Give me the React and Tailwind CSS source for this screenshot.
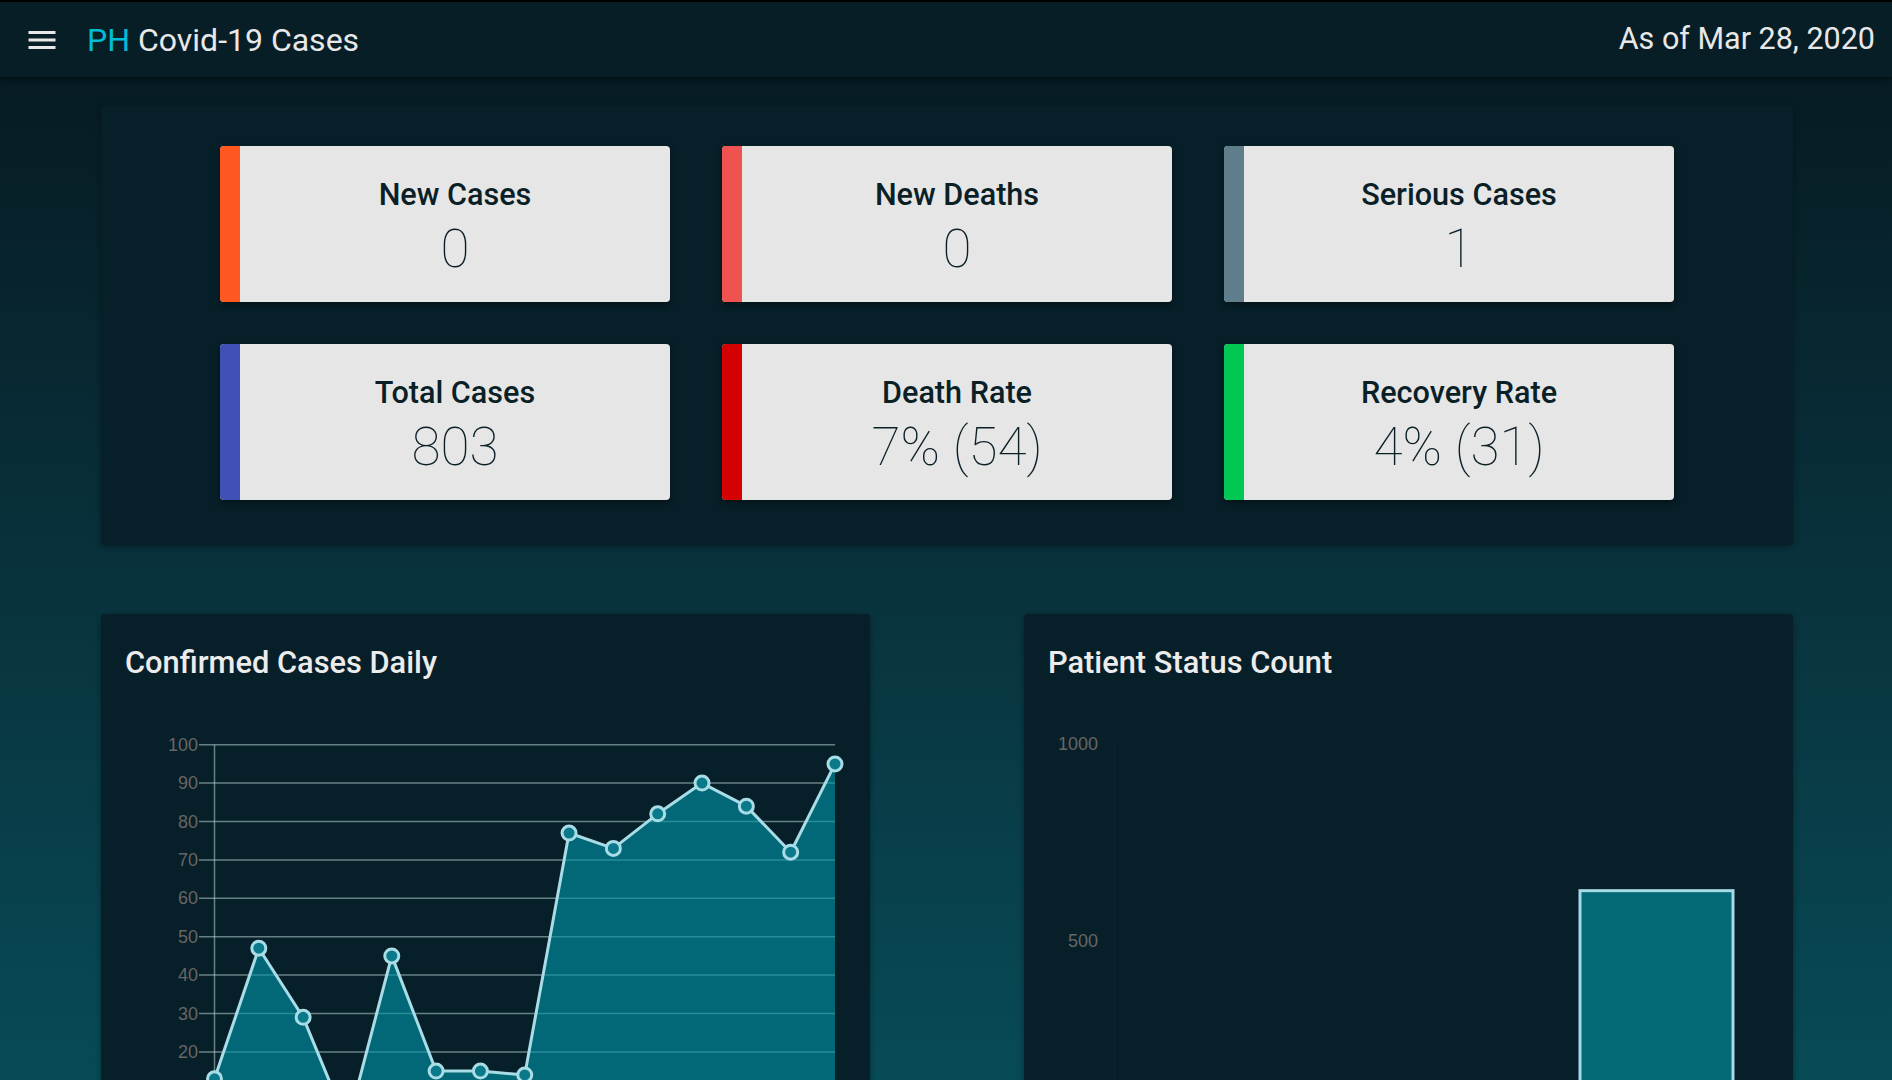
import React from "react";

const stats = [
  { title: "New Cases", value: "0", bar: "bg-[#ff5722]" },
  { title: "New Deaths", value: "0", bar: "bg-[#ef5350]" },
  { title: "Serious Cases", value: "1", bar: "bg-[#607d8b]" },
  { title: "Total Cases", value: "803", bar: "bg-[#3f51b5]" },
  { title: "Death Rate", value: "7% (54)", bar: "bg-[#d50000]" },
  { title: "Recovery Rate", value: "4% (31)", bar: "bg-[#00c853]" },
];

const daily = [13, 47, 29, 1, 45, 15, 15, 14, 77, 73, 82, 90, 84, 72, 95];
const days = [
  "Mar 14", "Mar 15", "Mar 16", "Mar 17", "Mar 18", "Mar 19", "Mar 20", "Mar 21",
  "Mar 22", "Mar 23", "Mar 24", "Mar 25", "Mar 26", "Mar 27", "Mar 28",
];

const status = [
  { label: "Died", value: 54 },
  { label: "Recovered", value: 31 },
  { label: "Admitted", value: 631 },
];

function StatCard({ title, value, bar }) {
  return (
    <div className="flex h-[156px] overflow-hidden rounded-[4px] bg-[#e6e6e6] shadow-[0_3px_6px_rgba(0,0,0,0.4)]">
      <div className={`w-[20px] shrink-0 ${bar}`} />
      <div className="flex flex-1 flex-col items-center pt-[31px] text-[#0b1f27]">
        <div className="text-[30.6px] font-medium leading-[36px]">{title}</div>
        <div className="mt-[6px] text-[53px] font-thin leading-[60px]">{value}</div>
      </div>
    </div>
  );
}

function Panel({ title, children }) {
  return (
    <div className="h-[590px] overflow-hidden rounded-[4px] bg-[#071f28] shadow-[0_2px_6px_rgba(0,0,0,0.35)]">
      <h2 className="px-6 pt-[31px] text-[30.8px] font-medium leading-[36px] text-[#ececec]">
        {title}
      </h2>
      {children}
    </div>
  );
}

function DailyChart() {
  // chart.js style area chart, plotted in panel-local pixels
  const x = (i) => 113.5 + i * 44.32;
  const y = (v) => 43.7 + (100 - v) * 3.84;
  const ticks = [100, 90, 80, 70, 60, 50, 40, 30, 20, 10, 0];
  const line = daily.map((v, i) => `${x(i)},${y(v)}`).join(" ");
  const area = `M${x(0)},${y(0)} L${line.replace(/ /g, " L")} L${x(14)},${y(0)} Z`;

  return (
    <svg width="769" height="500" className="mt-[20px] block">
      {ticks.map((t) => (
        <g key={t}>
          <line x1="98" x2="734" y1={y(t)} y2={y(t)} stroke="rgba(180,210,210,0.55)" strokeWidth="1.5" />
          <text
            x="97"
            y={y(t)}
            textAnchor="end"
            dominantBaseline="central"
            fontFamily="'Liberation Sans', Arial, sans-serif"
            fontSize="18"
            fill="#666"
          >
            {t}
          </text>
        </g>
      ))}
      <line x1="113.5" x2="113.5" y1={y(100)} y2={y(0) + 10} stroke="rgba(180,210,210,0.55)" strokeWidth="1.5" />
      <path d={area} fill="rgba(0,149,167,0.62)" />
      <polyline points={line} fill="none" stroke="#a8dce6" strokeWidth="3" strokeLinejoin="round" />
      {daily.map((v, i) => (
        <circle key={i} cx={x(i)} cy={y(v)} r="7" fill="#0a7a8a" stroke="#a8dce6" strokeWidth="3" />
      ))}
      {days.map((d, i) => (
        <text
          key={d}
          x={x(i)}
          y={y(0) + 28}
          textAnchor="middle"
          fontFamily="'Liberation Sans', Arial, sans-serif"
          fontSize="15"
          fill="#666"
        >
          {d}
        </text>
      ))}
    </svg>
  );
}

function StatusChart() {
  const y = (v) => 436.4 - v * 0.3934;
  const ticks = [1000, 500, 0];
  const slot = 216;

  return (
    <svg width="769" height="500" className="mt-[20px] block">
      {ticks.map((t) => (
        <g key={t}>
          <line x1="80" x2="739" y1={y(t)} y2={y(t)} stroke="rgba(255,255,255,0.025)" strokeWidth="1" />
          <text
            x="74"
            y={y(t)}
            textAnchor="end"
            dominantBaseline="central"
            fontFamily="'Liberation Sans', Arial, sans-serif"
            fontSize="18"
            fill="#666"
          >
            {t}
          </text>
        </g>
      ))}
      <line x1="90.5" x2="90.5" y1={y(1000)} y2={y(0)} stroke="rgba(255,255,255,0.025)" strokeWidth="1" />
      {status.map((s, i) => {
        const cx = 90.5 + slot * (i + 0.5) + 2;
        const top = y(s.value);
        return (
          <g key={s.label}>
            <rect
              x={cx - 76.5}
              y={top + 1.5}
              width="153"
              height={y(0) - top - 1.5}
              fill="#046a78"
              stroke="#a6dbe5"
              strokeWidth="3"
            />
            <text
              x={cx}
              y={y(0) + 28}
              textAnchor="middle"
              fontFamily="'Liberation Sans', Arial, sans-serif"
              fontSize="15"
              fill="#666"
            >
              {s.label}
            </text>
          </g>
        );
      })}
    </svg>
  );
}

export default function App() {
  return (
    <div className="min-h-screen bg-gradient-to-b from-[#061820] to-[#074b57] bg-fixed font-['Roboto','Noto_Sans',sans-serif]">
      {/* Top bar */}
      <header className="relative z-10 flex h-[77px] items-center border-t-2 border-black bg-[#071e27] pl-6 pr-[17px] text-[#e8e8e8] shadow-[0_2px_5px_rgba(0,0,0,0.5)]">
        <svg className="h-9 w-9" viewBox="0 0 24 24" fill="currentColor">
          <path d="M3 18h18v-2H3v2zm0-5h18v-2H3v2zm0-7v2h18V6H3z" />
        </svg>
        <h1 className="ml-[27px] text-[32px] leading-none">
          <span className="text-[#00bcd4]">PH</span> Covid-19 Cases
        </h1>
        <div className="ml-auto text-[30.5px] leading-none">As of Mar 28, 2020</div>
      </header>

      <main className="pb-10 pl-[101px] pr-[99px] pt-[29px]">
        {/* Summary cards */}
        <section className="rounded-[4px] bg-[#071f28] pb-[45px] pt-[40px] shadow-[0_2px_6px_rgba(0,0,0,0.35)]">
          <div className="grid grid-cols-[repeat(3,450px)] justify-center gap-x-[52px] gap-y-[42px]">
            {stats.map((s) => (
              <StatCard key={s.title} {...s} />
            ))}
          </div>
        </section>

        {/* Charts */}
        <div className="mt-[69px] grid grid-cols-2 gap-x-[154px]">
          <Panel title="Confirmed Cases Daily">
            <DailyChart />
          </Panel>
          <Panel title="Patient Status Count">
            <StatusChart />
          </Panel>
        </div>
      </main>
    </div>
  );
}
